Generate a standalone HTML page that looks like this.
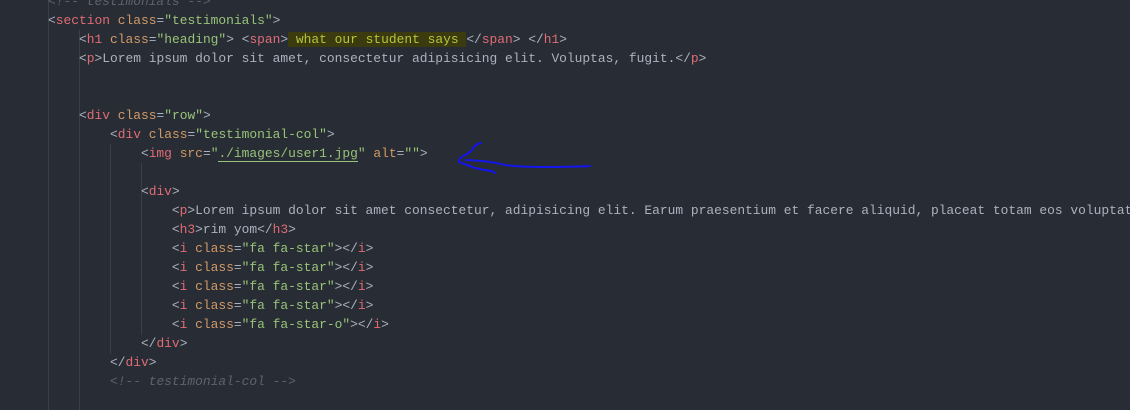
<!DOCTYPE html>
<html><head><style>
html,body{margin:0;padding:0;background:#282c34;width:1130px;height:410px;overflow:hidden;position:relative}
.c{position:absolute;left:48px;top:-8px;font-family:"Liberation Mono",monospace;font-size:12.92px;line-height:19px;color:#abb2bf;white-space:pre}
.t{color:#e06c75}.a{color:#d19a66}.s{color:#98c379}.cm{color:#5c6370;font-style:italic}
.hl{background:#3a3b0f;color:#b7c43a}
.g{position:absolute;width:1px;background:#3b4048}
u{text-decoration:none;border-bottom:1px solid #98c379}
</style></head><body>
<div class="g" style="left:48px;top:0;height:410px"></div>
<div class="g" style="left:79px;top:30px;height:380px"></div>
<div class="g" style="left:110px;top:144px;height:210px"></div>
<div class="g" style="left:141px;top:163px;height:172px"></div>
<div class="c"><span class="cm">&lt;!-- testimonials --&gt;</span>
&lt;<span class="t">section</span> <span class="a">class</span>=<span class="s">"testimonials"</span>&gt;
    &lt;<span class="t">h1</span> <span class="a">class</span>=<span class="s">"heading"</span>&gt; &lt;<span class="t">span</span>&gt;<span class="hl"> what our student says </span>&lt;/<span class="t">span</span>&gt; &lt;/<span class="t">h1</span>&gt;
    &lt;<span class="t">p</span>&gt;Lorem ipsum dolor sit amet, consectetur adipisicing elit. Voluptas, fugit.&lt;/<span class="t">p</span>&gt;


    &lt;<span class="t">div</span> <span class="a">class</span>=<span class="s">"row"</span>&gt;
        &lt;<span class="t">div</span> <span class="a">class</span>=<span class="s">"testimonial-col"</span>&gt;
            &lt;<span class="t">img</span> <span class="a">src</span>=<span class="s">"<u>./images/user1.jpg</u>"</span> <span class="a">alt</span>=<span class="s">""</span>&gt;

            &lt;<span class="t">div</span>&gt;
                &lt;<span class="t">p</span>&gt;Lorem ipsum dolor sit amet consectetur, adipisicing elit. Earum praesentium et facere aliquid, placeat totam eos voluptatum
                &lt;<span class="t">h3</span>&gt;rim yom&lt;/<span class="t">h3</span>&gt;
                &lt;<span class="t">i</span> <span class="a">class</span>=<span class="s">"fa fa-star"</span>&gt;&lt;/<span class="t">i</span>&gt;
                &lt;<span class="t">i</span> <span class="a">class</span>=<span class="s">"fa fa-star"</span>&gt;&lt;/<span class="t">i</span>&gt;
                &lt;<span class="t">i</span> <span class="a">class</span>=<span class="s">"fa fa-star"</span>&gt;&lt;/<span class="t">i</span>&gt;
                &lt;<span class="t">i</span> <span class="a">class</span>=<span class="s">"fa fa-star"</span>&gt;&lt;/<span class="t">i</span>&gt;
                &lt;<span class="t">i</span> <span class="a">class</span>=<span class="s">"fa fa-star-o"</span>&gt;&lt;/<span class="t">i</span>&gt;
            &lt;/<span class="t">div</span>&gt;
        &lt;/<span class="t">div</span>&gt;
        <span class="cm">&lt;!-- testimonial-col --&gt;</span></div>
<svg style="position:absolute;left:0;top:0" width="1130" height="410">
<g fill="none" stroke="#1515ee" stroke-width="2" stroke-linecap="round" stroke-linejoin="round">
<path d="M481 143 Q475 144 472 150 Q468 154 463 156 Q458 160 459 162 Q470 166 475 168 Q483 170 492 171 L495 173"/>
<path d="M466 160 Q490 161 505 165 Q520 167 545 167 Q570 167 590 166"/>
</g></svg>
</body></html>
